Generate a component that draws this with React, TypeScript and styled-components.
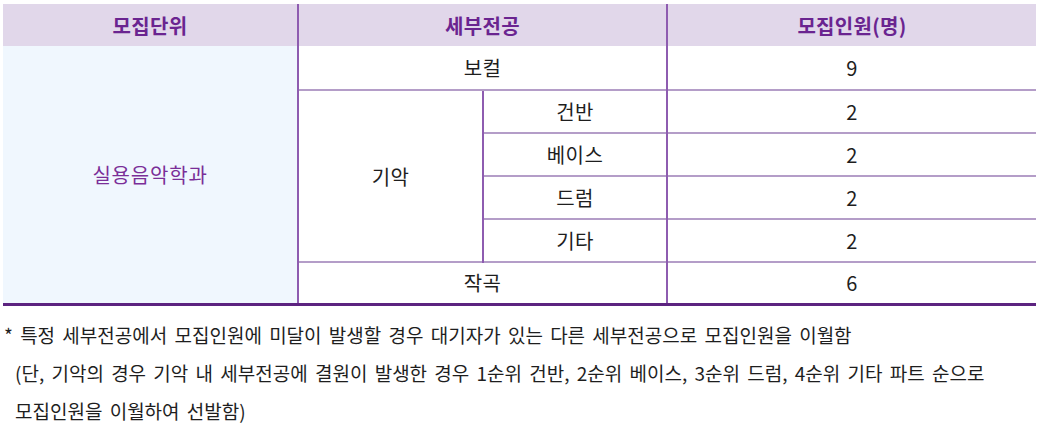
import styled, { createGlobalStyle } from "styled-components";

const GlobalStyle = createGlobalStyle`
  body {
    margin: 0;
    background: #fff;
    font-family: "Noto Sans CJK KR", "Noto Sans", sans-serif;
  }
`;

const VLINE = "#8e5cb0";
const HLINE = "#b49dc8";

type Row = { major: string; count: number };

const instruments: Row[] = [
  { major: "건반", count: 2 },
  { major: "베이스", count: 2 },
  { major: "드럼", count: 2 },
  { major: "기타", count: 2 },
];

const App = () => {
  return (
    <>
      <GlobalStyle />
      <Page>
        <Table>
          <colgroup>
            <col style={{ width: 295 }} />
            <col style={{ width: 185 }} />
            <col style={{ width: 184 }} />
            <col />
          </colgroup>
          <thead>
            <tr>
              <Th>모집단위</Th>
              <Th colSpan={2} $divider>
                세부전공
              </Th>
              <Th $divider>모집인원(명)</Th>
            </tr>
          </thead>
          <tbody>
            <Tr $h={44}>
              <Unit rowSpan={6}>실용음악학과</Unit>
              <Td colSpan={2} $left>
                보컬
              </Td>
              <Td $left>9</Td>
            </Tr>
            {instruments.map((it, i) => (
              <Tr key={it.major} $h={43}>
                {i === 0 && (
                  <Td rowSpan={4} $left $top>
                    기악
                  </Td>
                )}
                <Td $left $top>
                  {it.major}
                </Td>
                <Td $left $top>
                  {it.count}
                </Td>
              </Tr>
            ))}
            <Tr $h={42}>
              <Td colSpan={2} $left $top>
                작곡
              </Td>
              <Td $left $top>
                6
              </Td>
            </Tr>
          </tbody>
        </Table>
        <Notes>
          <Note>* 특정 세부전공에서 모집인원에 미달이 발생할 경우 대기자가 있는 다른 세부전공으로 모집인원을 이월함</Note>
          <Note $indent>
            (단, 기악의 경우 기악 내 세부전공에 결원이 발생한 경우 1순위 건반, 2순위 베이스, 3순위 드럼, 4순위 기타 파트 순으로
          </Note>
          <Note $indent>모집인원을 이월하여 선발함)</Note>
        </Notes>
      </Page>
    </>
  );
};

const Page = styled.div`
  padding: 4px 4px 0 3px;
`;

const Table = styled.table`
  width: 1033px;
  border-collapse: collapse;
  table-layout: fixed;
  border-bottom: 3px solid #5c2380;
`;

const Th = styled.th<{ $divider?: boolean }>`
  height: 42px;
  padding: 0;
  background: #e1d7ea;
  color: #6a2490;
  font-size: 20px;
  font-weight: 700;
  letter-spacing: 0.3px;
  text-align: center;
  border-left: ${(p) => (p.$divider ? `2px solid ${VLINE}` : "none")};
`;

const Tr = styled.tr<{ $h: number }>`
  height: ${(p) => p.$h}px;
`;

const Td = styled.td<{ $left?: boolean; $top?: boolean }>`
  padding: 0;
  color: #1e1e1e;
  font-size: 20px;
  letter-spacing: 0.4px;
  text-align: center;
  border-left: ${(p) => (p.$left ? `2px solid ${VLINE}` : "none")};
  border-top: ${(p) => (p.$top ? `2px solid ${HLINE}` : "none")};
`;

const Unit = styled.td`
  padding: 0;
  background: #f0f7fe;
  color: #7a2e98;
  font-size: 20px;
  letter-spacing: 0.8px;
  text-align: center;
`;

const Notes = styled.div`
  margin-top: 16px;
  display: flex;
  flex-direction: column;
  gap: 12px;
  padding-left: 1px;
`;

const Note = styled.div<{ $indent?: boolean }>`
  color: #1e1e1e;
  font-size: 19px;
  line-height: 26px;
  word-spacing: 3px;
  padding-left: ${(p) => (p.$indent ? "11px" : "0")};
`;

export default App;
